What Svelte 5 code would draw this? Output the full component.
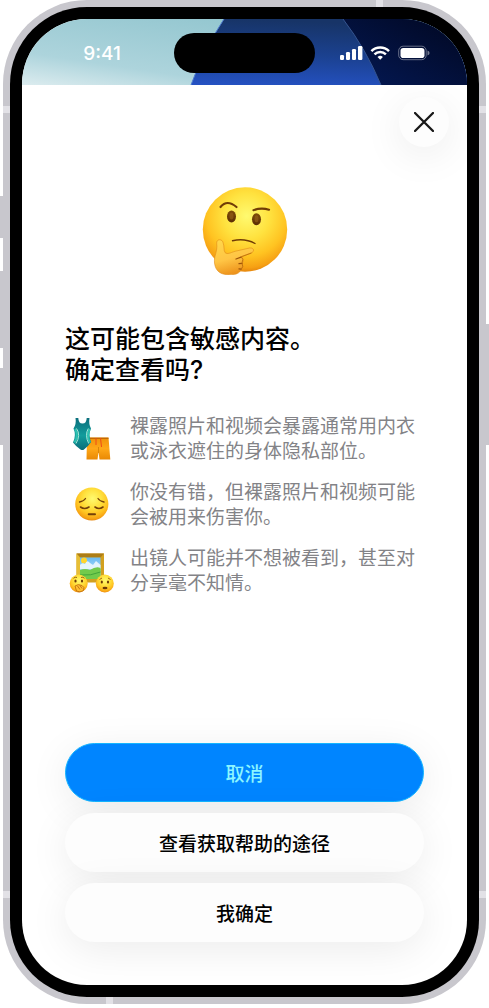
<script lang="ts">
    const reasons = [
        { icon: 'clothes', lines: ['裸露照片和视频会暴露通常用内衣', '或泳衣遮住的身体隐私部位。'] },
        { icon: 'sad', lines: ['你没有错，但裸露照片和视频可能', '会被用来伤害你。'] },
        { icon: 'picture', lines: ['出镜人可能并不想被看到，甚至对', '分享毫不知情。'] },
    ];
</script>

<svelte:head>
    <title>敏感内容警告</title>
</svelte:head>

<div class="phone">
    <span class="side-key action"></span>
    <span class="side-key volume-up"></span>
    <span class="side-key volume-down"></span>
    <span class="side-key power"></span>
    <span class="band left upper"></span>
    <span class="band right upper"></span>
    <span class="band left lower"></span>
    <span class="band right lower"></span>
    <span class="band top"></span>
    <span class="band bottom"></span>

    <div class="bezel">
        <div class="screen">
            <header class="status-bar">
                <svg class="wallpaper" viewBox="0 0 445 66" preserveAspectRatio="none" aria-hidden="true">
                    <defs>
                        <linearGradient id="sky" x1="0" y1="1" x2="1" y2="0">
                            <stop offset="0" stop-color="#dcecef" />
                            <stop offset="0.25" stop-color="#add4dc" />
                            <stop offset="1" stop-color="#86bfc9" />
                        </linearGradient>
                        <linearGradient id="blue" x1="0" y1="1" x2="0.15" y2="0">
                            <stop offset="0" stop-color="#2552c4" />
                            <stop offset="0.5" stop-color="#1b4190" />
                            <stop offset="1" stop-color="#173467" />
                        </linearGradient>
                        <linearGradient id="night" x1="0" y1="1" x2="1" y2="0">
                            <stop offset="0" stop-color="#041955" />
                            <stop offset="1" stop-color="#010720" />
                        </linearGradient>
                    </defs>
                    <rect width="445" height="66" fill="url(#sky)" />
                    <path d="M169 66Q181 32 202 0H445V66Z" fill="url(#blue)" />
                    <path d="M321 0H445V66H359Q344 30 321 0Z" fill="url(#night)" />
                    <path d="M169 66Q181 32 202 0" fill="none" stroke="#4d79cf" />
                    <path d="M321 0Q344 30 359 66" fill="none" stroke="#35548f" />
                </svg>
                <span class="time">9:41</span>
                <span class="island"></span>
                <svg class="signals" viewBox="0 0 90 16" aria-label="信号、无线局域网、电池">
                    <g fill="#fff">
                        <rect x="0" y="10" width="4" height="5" rx="1.2" />
                        <rect x="6" y="7" width="4" height="8" rx="1.2" />
                        <rect x="12" y="4" width="4" height="11" rx="1.2" />
                        <rect x="18" y="1" width="4.4" height="14" rx="1.2" />
                        <path d="M40.200 14.800L37.500 12A4 4 0 0 1 42.900 12Z" />
                    </g>
                    <g fill="none" stroke="#fff" stroke-width="2.500">
                        <path d="M31.400 6.100A12.500 12.500 0 0 1 49 6.100" />
                        <path d="M34.500 9.400A8.200 8.200 0 0 1 45.900 9.400" />
                    </g>
                    <rect x="58.700" y="1.200" width="27.500" height="13.500" rx="4.500" fill="none" stroke="#fff" stroke-opacity="0.4" />
                    <rect x="60.500" y="3" width="24" height="10" rx="2.800" fill="#fff" />
                    <path d="M87.500 5.600Q89.600 6.300 89.600 8T87.500 10.400Z" fill="#fff" opacity="0.45" />
                </svg>
            </header>

            <main class="sheet">
                <button class="close" type="button" aria-label="关闭">
                    <svg viewBox="0 0 20 20" aria-hidden="true">
                        <path d="M1 1L19 19M19 1L1 19" fill="none" stroke="#181818" stroke-width="2.300" stroke-linecap="round" />
                    </svg>
                </button>

                <svg class="hero" viewBox="12 12 86 88" aria-hidden="true">
                    <defs>
                        <radialGradient id="face" cx="0.52" cy="0.34" r="0.68">
                            <stop offset="0" stop-color="#fffa70" />
                            <stop offset="0.4" stop-color="#ffe23f" />
                            <stop offset="0.7" stop-color="#ffc321" />
                            <stop offset="0.9" stop-color="#f6a013" />
                            <stop offset="1" stop-color="#df7c0c" />
                        </radialGradient>
                        <linearGradient id="hand" x1="0" y1="0" x2="0.3" y2="1">
                            <stop offset="0" stop-color="#ffd84b" />
                            <stop offset="0.6" stop-color="#ffc545" />
                            <stop offset="1" stop-color="#ee951d" />
                        </linearGradient>
                        <linearGradient id="eye" x1="0" y1="0" x2="0" y2="1">
                            <stop offset="0" stop-color="#7f4c08" />
                            <stop offset="1" stop-color="#5b2d04" />
                        </linearGradient>
                    </defs>
                    <circle cx="55" cy="54.500" r="42.200" fill="url(#face)" />
                    <ellipse cx="41.500" cy="41.500" rx="4.500" ry="6" fill="url(#eye)" />
                    <ellipse cx="66.500" cy="44.300" rx="4.500" ry="6" fill="url(#eye)" />
                    <ellipse cx="41.500" cy="41" rx="2" ry="3.500" fill="#99631b" opacity="0.6" />
                    <ellipse cx="66.500" cy="43.800" rx="2" ry="3.500" fill="#99631b" opacity="0.6" />
                    <g fill="none" stroke="#713c06" stroke-linecap="round">
                        <path d="M30.500 32Q37 24 46.500 32" stroke-width="2.200" />
                        <path d="M63.500 35.200Q71 32.500 79 34.700" stroke-width="2.200" />
                        <path d="M42.500 65.700Q55 63 65 68.500" stroke-width="1.400" />
                    </g>
                    <path d="M26.700 68C26.500 64 32.200 63.400 33.200 68C34.500 72 33.500 75 35 77.500C37.500 79.800 40 77.800 45 76.300L59.500 73C64.500 72.400 64.700 77 61 78L51 81.700C54 83.500 53.500 87 51.800 88.500C53.300 91 52.500 93.700 51 94.500C50 98 46 99.700 41.500 99.600C32 100.500 25.500 97 24.500 88C23.800 80 27.700 77.500 26.700 68Z" fill="url(#hand)" stroke="#e08b17" stroke-width="0.600" />
                    <path d="M51 82.200L46 84M52 88.300L49 88.600M51 94.200L49 93.800" fill="none" stroke="#9c540a" stroke-width="1.300" stroke-linecap="round" />
                    <path d="M61.500 78L51.300 81.800Q54 84 52 88Q54 92 51 94.500" fill="none" stroke="#b96b0d" stroke-width="0.800" />
                </svg>

                <h1>这可能包含敏感内容。<br />确定查看吗?</h1>

                <ul class="reasons">
                    {#each reasons as reason}
                        <li>
                            {#if reason.icon === 'clothes'}
                                <svg viewBox="8 9 48 48" aria-hidden="true">
                                    <defs>
                                        <linearGradient id="teal" x1="0" y1="0" x2="0" y2="1">
                                            <stop offset="0" stop-color="#0b6e7c" />
                                            <stop offset="0.55" stop-color="#129c9c" />
                                            <stop offset="1" stop-color="#0a6d7a" />
                                        </linearGradient>
                                        <linearGradient id="shorts" x1="0" y1="0" x2="0" y2="1">
                                            <stop offset="0" stop-color="#ef9208" />
                                            <stop offset="0.5" stop-color="#ffa818" />
                                            <stop offset="1" stop-color="#e98905" />
                                        </linearGradient>
                                    </defs>
                                    <path d="M27 31.500H48.500L50.300 53.500H39.500L38.500 46L37.500 53.500H26.500Z" fill="url(#shorts)" />
                                    <path d="M27 32.300H48.500" stroke="#bd6504" stroke-width="1.200" />
                                    <path d="M36 32V39M40.500 32L41.500 41" stroke="#ef4a18" stroke-width="1" />
                                    <path d="M38.500 41V47" stroke="#d17f09" stroke-width="0.800" />
                                    <path d="M15.500 12H18.300Q18.500 17.500 22.500 17.500T26.700 12H29.500Q28.500 18 31 22.500Q28 29 31.200 36Q28 40.500 24 43.500Q22.500 44.500 20.500 43.500Q16 40.500 13 36.500Q16.500 29 13.500 22.500Q16.500 18 15.500 12Z" fill="url(#teal)" />
                                    <path d="M15 23Q19 29 14.500 36.500M29.800 23Q26 29 30 36.500" fill="none" stroke="#2ec2b1" stroke-width="2" />
                                    <path d="M16.500 22.500Q21 29 16 37.500M28.300 22.500Q24.500 29 28.700 37.500" fill="none" stroke="#a5e8d8" stroke-width="1" />
                                </svg>
                            {:else if reason.icon === 'sad'}
                                <svg viewBox="8 5 48 48" aria-hidden="true">
                                    <circle cx="31.800" cy="28" r="16.600" fill="url(#face)" />
                                    <g fill="none" stroke="#744009" stroke-linecap="round" stroke-width="1.300">
                                        <path d="M19.500 26Q24 25 25.500 22.500M44 26Q39.500 25 38 22.500" />
                                        <path d="M20.500 31Q24.500 34 29 31M35 31Q39 34 43 31" stroke-width="1.600" />
                                        <path d="M28.700 38.300H35" stroke-width="2" />
                                    </g>
                                </svg>
                            {:else}
                                <svg viewBox="8 6 48 48" aria-hidden="true">
                                    <defs>
                                        <linearGradient id="view" x1="0" y1="0" x2="0" y2="1">
                                            <stop offset="0" stop-color="#69baf2" />
                                            <stop offset="1" stop-color="#d5f0ff" />
                                        </linearGradient>
                                    </defs>
                                    <rect x="16.500" y="12.500" width="27.500" height="29" fill="#d2a01f" />
                                    <path d="M16.500 12.500H44L40.500 16.500H20Z" fill="#ad7d16" />
                                    <path d="M16.500 12.500L20 16.500V38L16.500 41.500Z" fill="#e7be35" />
                                    <rect x="20" y="16.500" width="20.500" height="21.500" fill="url(#view)" />
                                    <circle cx="24" cy="19.500" r="3" fill="#ffd52d" />
                                    <path d="M20 24Q22 21 25 23Q27 18 30 22L33 24L36 20L40.500 24V28H20Z" fill="#e4f4fc" />
                                    <path d="M20 29Q25 27 30 29Q36 25 40.500 27V38H20Z" fill="#72ca4b" />
                                    <path d="M20 34Q31 35 40.500 31" fill="none" stroke="#42a539" />
                                    <circle cx="18.700" cy="42.500" r="9" fill="url(#face)" />
                                    <circle cx="44.800" cy="42.500" r="9" fill="url(#face)" />
                                    <g fill="#6d3907">
                                        <ellipse cx="15.500" cy="40" rx="1.100" ry="1.500" />
                                        <ellipse cx="22" cy="40" rx="1.100" ry="1.500" />
                                        <ellipse cx="41.800" cy="41" rx="1.100" ry="1.500" />
                                        <ellipse cx="48" cy="41" rx="1.100" ry="1.500" />
                                        <ellipse cx="45" cy="47" rx="2.500" ry="1.200" />
                                    </g>
                                    <path d="M13.500 37.300Q15 35.500 17 36.500M21 36.500Q23 35.500 24.500 37.300M39.500 38.500L42 37M48 37L50.500 38.500" fill="none" stroke="#82490b" stroke-width="0.800" />
                                    <path d="M15 45Q18 42.500 22 44.500Q25 46 23.500 49.500Q20 52 16.500 50Z" fill="#ffbf31" stroke="#b8640a" stroke-width="0.800" />
                                    <path d="M17.500 45L20 48.500M20 44.500L22 47.500" stroke="#b8640a" stroke-width="0.800" />
                                </svg>
                            {/if}
                            <p>{reason.lines[0]}<br />{reason.lines[1]}</p>
                        </li>
                    {/each}
                </ul>

                <div class="actions">
                    <button class="primary" type="button">取消</button>
                    <button type="button">查看获取帮助的途径</button>
                    <button type="button">我确定</button>
                </div>
            </main>
        </div>
    </div>
</div>

<style>
    :global(body) {
        background: #fff;
    }

    .phone {
        position: relative;
        box-sizing: border-box;
        display: flex;
        min-height: calc(100vh - 4px);
        margin: 0 3px 4px;
        padding: 7px;
        border-radius: 84px;
        background: #c8c7cd;
        color: #000;
        font-family: Inter, "Noto Sans CJK SC", sans-serif;
    }

    .bezel {
        box-sizing: border-box;
        display: flex;
        flex: 1;
        padding: 12px;
        border-radius: 77px;
        background: #000;
    }

    .screen {
        display: flex;
        flex: 1;
        flex-direction: column;
        overflow: hidden;
        border-radius: 65px;
        background: #fff;
    }

    .side-key {
        position: absolute;
        left: -3px;
        width: 3px;
        background: #c8c7cd;
    }

    .action {
        top: 196px;
        height: 42px;
    }

    .volume-up {
        top: 271px;
        height: 77px;
    }

    .volume-down {
        top: 368px;
        height: 77px;
    }

    .power {
        top: 324px;
        right: -3px;
        left: auto;
        height: 121px;
    }

    .band {
        position: absolute;
        width: 7px;
        height: 7px;
        background: #e2e1e6;
    }

    .left {
        left: 0;
    }

    .right {
        right: 0;
    }

    .upper {
        top: 106px;
    }

    .lower {
        bottom: 106px;
    }

    .top {
        top: 0;
        right: 103px;
    }

    .bottom {
        bottom: 0;
        left: 103px;
    }

    .status-bar {
        position: relative;
        display: grid;
        grid-template-columns: 1fr 141px 1fr;
        align-items: center;
        box-sizing: border-box;
        height: 66px;
        padding-top: 2px;
    }

    .wallpaper {
        position: absolute;
        top: 0;
        width: 100%;
        height: 100%;
    }

    .time {
        position: relative;
        padding: 2px 0 0 8px;
        color: #fff;
        font-size: 19px;
        font-weight: 500;
        line-height: 24px;
        text-align: center;
    }

    .island {
        position: relative;
        height: 40px;
        border-radius: 20px;
        background: #000;
    }

    .signals {
        position: relative;
        justify-self: center;
        width: 90px;
        height: 16px;
        margin-right: 12px;
    }

    .sheet {
        display: flex;
        flex: 1;
        flex-direction: column;
        padding: 12px 43px 43px;
    }

    button {
        border: 0;
        background: #fdfdfd;
        box-shadow: 0 8px 40px rgba(0, 0, 0, 0.08);
        color: #000;
        font-family: inherit;
        cursor: pointer;
    }

    .close {
        display: grid;
        place-items: center;
        align-self: flex-end;
        width: 50px;
        height: 50px;
        margin-right: -25px;
        padding: 0;
        border-radius: 50%;
    }

    .close svg {
        width: 20px;
        height: 20px;
    }

    .hero {
        align-self: center;
        width: 86px;
        height: 88px;
        margin-top: 40px;
    }

    h1 {
        margin: 49px 0 28px;
        font-size: 25px;
        font-weight: 500;
        line-height: 31px;
    }

    .reasons {
        display: grid;
        gap: 16px;
        margin: 0;
        padding: 0;
        list-style: none;
    }

    .reasons li {
        display: flex;
        align-items: center;
        gap: 14px;
        padding-left: 3px;
    }

    .reasons svg {
        flex: none;
        width: 48px;
        height: 48px;
    }

    .reasons p {
        margin: 0;
        color: #838387;
        font-size: 19px;
        font-weight: 400;
        line-height: 25px;
        white-space: nowrap;
    }

    .actions {
        display: grid;
        gap: 11px;
        margin-top: auto;
        padding-top: 24px;
    }

    .actions button {
        height: 59px;
        border-radius: 30px;
        font-size: 19px;
        font-weight: 500;
    }

    .actions .primary {
        border: 1px solid #13b5ff;
        background: #0085ff;
        color: #8cf5ff;
    }
</style>
